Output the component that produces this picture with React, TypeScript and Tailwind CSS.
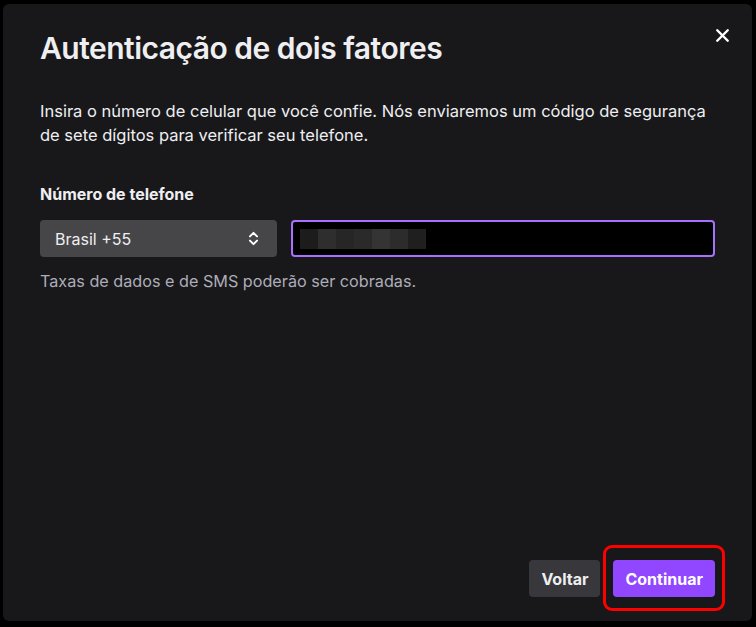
import { X, ChevronsUpDown } from "lucide-react";

export default function App() {
  return (
    <div
      className="w-[756px] h-[627px] bg-black pt-[4px] pl-[3px] pr-[4px] pb-[6px]"
      style={{ fontFamily: "Inter, 'Noto Sans', sans-serif" }}
    >
      <div className="h-full rounded-md bg-[#18181b] flex flex-col pt-[26px] pl-[37px] pr-[37px] pb-[24px] text-[#efeff1]">
        {/* Header */}
        <div className="flex items-start justify-between">
          <h1 className="text-[30px] leading-[36px] font-semibold tracking-[-0.5px]">
            Autenticação de dois fatores
          </h1>
          <button className="mt-[-10px] mr-[-22px] w-[30px] h-[30px] flex items-center justify-center text-white">
            <X className="w-[21px] h-[21px]" strokeWidth={2.75} />
          </button>
        </div>

        {/* Body */}
        <p className="mt-[33px] text-[16.5px] leading-[24px]">
          Insira o número de celular que você confie. Nós enviaremos um código de segurança
          <br />
          de sete dígitos para verificar seu telefone.
        </p>

        <label className="mt-[35px] text-[16px] leading-[24px] font-bold">
          Número de telefone
        </label>

        <div className="mt-[14px] flex gap-[14px]">
          <div className="w-[237px] h-[37px] rounded-[4px] bg-[#464649] flex items-center justify-between pl-[15px] pr-[15px]">
            <span className="text-[16px]">Brasil +55</span>
            <ChevronsUpDown className="w-[17px] h-[17px] text-white" strokeWidth={2.75} />
          </div>
          <div className="flex-1 h-[37px] rounded-[4px] bg-black border-2 border-[#a970ff] flex items-center pl-[7px]">
            <div className="flex h-[20px]">
              <div className="w-[18px] bg-[#1c1c1c]" />
              <div className="w-[18px] bg-[#2e2e2e]" />
              <div className="w-[18px] bg-[#262626]" />
              <div className="w-[18px] bg-[#2a2a2a]" />
              <div className="w-[18px] bg-[#343434]" />
              <div className="w-[18px] bg-[#2c2c2c]" />
              <div className="w-[18px] bg-[#1f1f1f]" />
            </div>
          </div>
        </div>

        <p className="mt-[14px] text-[16.2px] leading-[20px] text-[#adadb8]">
          Taxas de dados e de SMS poderão ser cobradas.
        </p>

        <div className="flex-1" />

        {/* Footer */}
        <div className="flex justify-end gap-[13px]">
          <button className="h-[37px] px-[12px] rounded-[4px] bg-[#38383c] text-[16px] font-bold">
            Voltar
          </button>
          <button className="relative h-[37px] px-[12px] rounded-[4px] bg-[#9147ff] text-white text-[16px] font-bold">
            Continuar
            <span className="absolute -left-[10px] -right-[10px] -top-[15px] -bottom-[14px] border-[3px] border-[#ff0000] rounded-[9px] pointer-events-none" />
          </button>
        </div>
      </div>
    </div>
  );
}
